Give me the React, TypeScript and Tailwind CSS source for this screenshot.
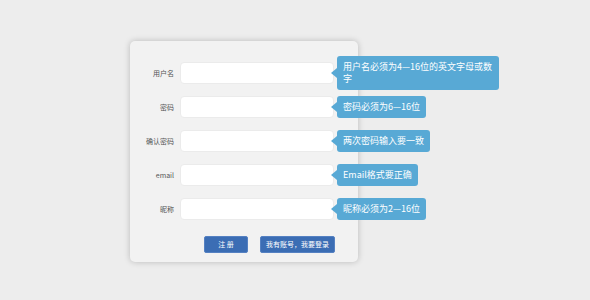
const fields = [
  { label: "用户名", tip: "用户名必须为4—16位的英文字母或数字", type: "text" },
  { label: "密码", tip: "密码必须为6—16位", type: "password" },
  { label: "确认密码", tip: "两次密码输入要一致", type: "password" },
  { label: "email", tip: "Email格式要正确", type: "text" },
  { label: "昵称", tip: "昵称必须为2—16位", type: "text" },
];

function Tip({ text }: { text: string }) {
  return (
    <div className="absolute left-[151px] top-1/2 -translate-y-1/2 flex w-max items-center">
      <span className="w-0 h-0 border-y-[5px] border-y-transparent border-r-[6px] border-r-[#58a9d5]" />
      <div className="max-w-[162px] rounded-[3px] bg-[#58a9d5] px-[6px] py-[5px] text-[9px] leading-[12px] text-white">
        {text}
      </div>
    </div>
  );
}

export default function App() {
  return (
    <div className="h-[300px] w-[590px] bg-[#ededed] pt-[41px] pl-[130px] font-['Noto_Sans_CJK_SC','Microsoft_YaHei',sans-serif]">
      <div className="w-[228px] h-[221px] rounded-[5px] bg-[#f2f2f2] shadow-[0_0_6px_rgba(0,0,0,0.22)] pt-[21px]">
        <div className="flex flex-col gap-[12px]">
          {fields.map((f) => (
            <div key={f.label} className="flex items-center">
              <label className="w-[44px] text-right text-[7px] text-[#555]">{f.label}</label>
              <div className="relative ml-[6px]">
                <input
                  type={f.type}
                  className="block w-[154px] h-[22px] rounded-[4px] border border-[#ebebeb] bg-white outline-none"
                />
                <Tip text={f.tip} />
              </div>
            </div>
          ))}
        </div>
        <div className="mt-[16px] flex gap-[12px] pl-[74px]">
          <button className="h-[17px] w-[44px] rounded-[2px] border border-[#5581c2] bg-[#3b6db4] text-[7px] text-white">
            注 册
          </button>
          <button className="h-[17px] w-[75px] rounded-[2px] border border-[#5581c2] bg-[#3b6db4] text-[7px] text-white">
            我有账号，我要登录
          </button>
        </div>
      </div>
    </div>
  );
}
